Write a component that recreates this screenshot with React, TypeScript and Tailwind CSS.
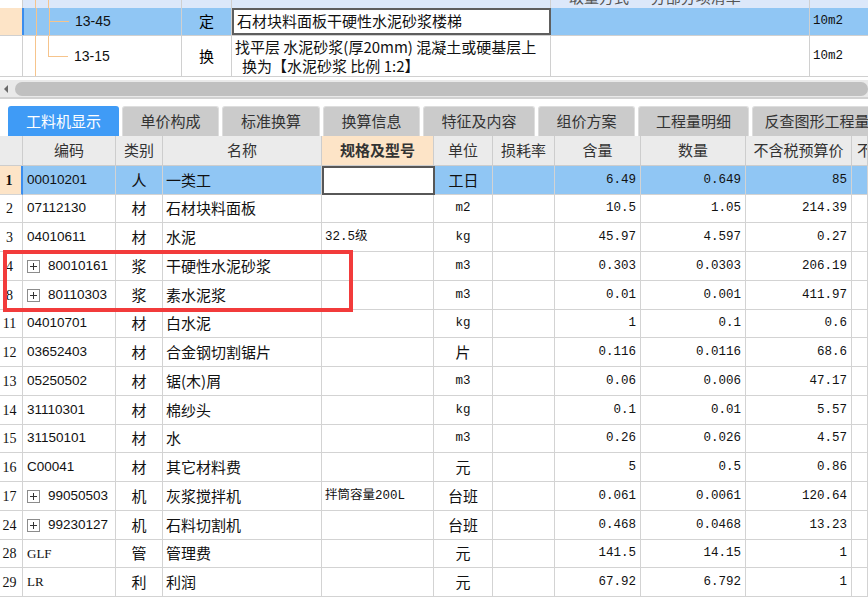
import React from "react";

const CJK = "font-['Noto_Sans_CJK_SC',sans-serif]";
const MONO = "font-['Liberation_Mono','Noto_Sans_CJK_SC',monospace]";
const SANS = "font-['Liberation_Sans','Noto_Sans_CJK_SC',sans-serif]";
const SERIF = "font-['Liberation_Serif','Noto_Sans_CJK_SC',serif]";

type Item = {
  n: string;
  code: string;
  plus?: boolean;
  serifCode?: boolean;
  kind: string;
  name: string;
  spec?: string;
  unit: string;
  qty: string;
  amt: string;
  price: string;
};

const items: Item[] = [
  { n: "1", code: "00010201", kind: "人", name: "一类工", unit: "工日", qty: "6.49", amt: "0.649", price: "85" },
  { n: "2", code: "07112130", kind: "材", name: "石材块料面板", unit: "m2", qty: "10.5", amt: "1.05", price: "214.39" },
  { n: "3", code: "04010611", kind: "材", name: "水泥", spec: "32.5级", unit: "kg", qty: "45.97", amt: "4.597", price: "0.27" },
  { n: "4", code: "80010161", plus: true, kind: "浆", name: "干硬性水泥砂浆", unit: "m3", qty: "0.303", amt: "0.0303", price: "206.19" },
  { n: "8", code: "80110303", plus: true, kind: "浆", name: "素水泥浆", unit: "m3", qty: "0.01", amt: "0.001", price: "411.97" },
  { n: "11", code: "04010701", kind: "材", name: "白水泥", unit: "kg", qty: "1", amt: "0.1", price: "0.6" },
  { n: "12", code: "03652403", kind: "材", name: "合金钢切割锯片", unit: "片", qty: "0.116", amt: "0.0116", price: "68.6" },
  { n: "13", code: "05250502", kind: "材", name: "锯(木)屑", unit: "m3", qty: "0.06", amt: "0.006", price: "47.17" },
  { n: "14", code: "31110301", kind: "材", name: "棉纱头", unit: "kg", qty: "0.1", amt: "0.01", price: "5.57" },
  { n: "15", code: "31150101", kind: "材", name: "水", unit: "m3", qty: "0.26", amt: "0.026", price: "4.57" },
  { n: "16", code: "C00041", kind: "材", name: "其它材料费", unit: "元", qty: "5", amt: "0.5", price: "0.86" },
  { n: "17", code: "99050503", plus: true, kind: "机", name: "灰浆搅拌机", spec: "拌筒容量200L", unit: "台班", qty: "0.061", amt: "0.0061", price: "120.64" },
  { n: "24", code: "99230127", plus: true, kind: "机", name: "石料切割机", unit: "台班", qty: "0.468", amt: "0.0468", price: "13.23" },
  { n: "28", code: "GLF", serifCode: true, kind: "管", name: "管理费", unit: "元", qty: "141.5", amt: "14.15", price: "1" },
  { n: "29", code: "LR", serifCode: true, kind: "利", name: "利润", unit: "元", qty: "67.92", amt: "6.792", price: "1" },
];

const rowHeights = [
  "h-[29px]", "h-[28px]", "h-[29px]", "h-[29px]", "h-[29px]", "h-[28px]", "h-[29px]", "h-[29px]",
  "h-[29px]", "h-[28px]", "h-[29px]", "h-[29px]", "h-[29px]", "h-[28px]", "h-[29px]",
];

const tabs = [
  { label: "工料机显示", w: "w-[111px]" },
  { label: "单价构成", w: "w-[97px]" },
  { label: "标准换算", w: "w-[98px]" },
  { label: "换算信息", w: "w-[97px]" },
  { label: "特征及内容", w: "w-[112px]" },
  { label: "组价方案", w: "w-[97px]" },
  { label: "工程量明细", w: "w-[111px]" },
  { label: "反查图形工程量", w: "w-[130px]" },
];

// tree connector for the upper grid (vertical trunk + elbow)
function Tree({ h, elbow, stemEnd }: { h: number; elbow?: number; stemEnd?: number }) {
  return (
    <svg width="50" height={h} className="shrink-0 block">
      <line x1="12.5" y1="0" x2="12.5" y2={h} stroke="#f6c48c" strokeWidth="1" />
      <line x1="25.5" y1="0" x2="25.5" y2={stemEnd ?? h} stroke="#f6c48c" strokeWidth="1" />
      {elbow !== undefined && (
        <line x1="25" y1={elbow + 0.5} x2="45" y2={elbow + 0.5} stroke="#f6c48c" strokeWidth="1" />
      )}
    </svg>
  );
}

function TopPane() {
  const line = "border-r border-[#d0d0d0]";
  return (
    <div className="flex flex-col">
      <div className="flex h-[8px] overflow-hidden bg-[#dce8fa]">
        <div className={`w-[23px] shrink-0 bg-white ${line}`} />
        <div className={`w-[159px] shrink-0 ${line}`}>
          <Tree h={8} />
        </div>
        <div className={`w-[50px] shrink-0 ${line}`} />
        <div className={`w-[319px] shrink-0 ${line}`} />
        <div className={`w-[259px] shrink-0 overflow-hidden ${line}`}>
          <div className={`-mt-[12px] pl-[18px] text-[15px] leading-[18px] text-[#555] whitespace-nowrap ${CJK}`}>
            取量方式 · 分部分项清单
          </div>
        </div>
        <div className="flex-1" />
      </div>

      <div className="flex h-[28px] bg-[#90c6f4] border-b border-[#d0d0d0]">
        <div className="w-[24px] shrink-0 bg-[#fde4c7] border-r-2 border-[#3b8ded]" />
        <div className={`w-[158px] shrink-0 flex items-center ${line}`}>
          <Tree h={28} elbow={13} />
          <span className={`ml-[1px] text-[14px] text-[#111] ${SANS}`}>13-45</span>
        </div>
        <div className={`w-[50px] shrink-0 flex items-center justify-center text-[15px] ${CJK} ${line}`}>定</div>
        <div className={`w-[319px] shrink-0 bg-white border-2 border-[#5e5e5e] flex items-center pl-[3px] text-[15px] text-[#111] whitespace-nowrap ${CJK}`}>
          石材块料面板干硬性水泥砂浆楼梯
        </div>
        <div className={`w-[259px] shrink-0 ${line}`} />
        <div className={`flex-1 flex items-center pl-[3px] text-[12.5px] text-[#111] ${MONO}`}>10m2</div>
      </div>

      <div className="flex h-[41px] bg-white border-b border-[#d0d0d0]">
        <div className={`w-[23px] shrink-0 ${line}`} />
        <div className={`w-[159px] shrink-0 flex items-center ${line}`}>
          <Tree h={40} elbow={20} stemEnd={21} />
          <span className={`ml-[1px] text-[14px] text-[#111] ${SANS}`}>13-15</span>
        </div>
        <div className={`w-[50px] shrink-0 flex items-center justify-center text-[15px] ${CJK} ${line}`}>换</div>
        <div className={`w-[319px] shrink-0 flex flex-col justify-center gap-[1px] pl-[3px] text-[15px] leading-[18px] text-[#111] whitespace-nowrap ${CJK} ${line}`}>
          <div className="h-[18px]">找平层 水泥砂浆(厚20mm) 混凝土或硬基层上</div>
          <div className="h-[18px] pl-[7px]">换为【水泥砂浆 比例 1:2】</div>
        </div>
        <div className={`w-[259px] shrink-0 ${line}`} />
        <div className={`flex-1 flex items-center pl-[3px] text-[12.5px] text-[#111] ${MONO}`}>10m2</div>
      </div>

      <div className="h-[3px] bg-white" />

      <div className="flex items-center h-[17px] bg-[#e9e9e9]">
        <svg width="12" height="10" className="shrink-0 ml-[1px]">
          <polygon points="7,1 3,5 7,9" fill="#6a6a6a" />
        </svg>
        <div className="flex-1 h-[14px] rounded-[7px] bg-[#c0c0c0] ml-[2px]" />
      </div>
      <div className="h-[2px] bg-[#d2d2d2]" />
      <div className="h-[7px] bg-white" />
    </div>
  );
}

function Tabs() {
  return (
    <div className="flex items-end gap-[3px] pl-[8px] h-[30px] overflow-hidden">
      {tabs.map((t, i) => (
        <div
          key={t.label}
          className={`${t.w} shrink-0 h-[30px] flex items-center justify-center rounded-t-[3px] text-[15px] whitespace-nowrap ${CJK} ${
            i === 0
              ? "bg-[#3f9bf6] text-white"
              : "bg-[#cbcbcb] text-[#333] border border-b-0 border-[#dedede]"
          }`}
        >
          {t.label}
        </div>
      ))}
    </div>
  );
}

function PlusBox() {
  return (
    <svg width="13" height="13" className="shrink-0 block">
      <rect x="0.5" y="0.5" width="12" height="12" fill="white" stroke="#8c8c8c" />
      <line x1="3" y1="6.5" x2="10" y2="6.5" stroke="#333" />
      <line x1="6.5" y1="3" x2="6.5" y2="10" stroke="#333" />
    </svg>
  );
}

function HeaderRow() {
  const hc = `shrink-0 h-full flex items-center justify-center border-r border-b border-[#cdcdcd] text-[15px] text-[#333] whitespace-nowrap ${CJK}`;
  return (
    <div className="flex h-[30px] bg-[#ebebeb]">
      <div className={`${hc} w-[23px]`} />
      <div className={`${hc} w-[93px]`}>编码</div>
      <div className={`${hc} w-[47px]`}>类别</div>
      <div className={`${hc} w-[159px]`}>名称</div>
      <div className={`${hc} w-[112px] bg-[#fde4c7] font-bold text-[#222]`}>规格及型号</div>
      <div className={`${hc} w-[59px]`}>单位</div>
      <div className={`${hc} w-[62px]`}>损耗率</div>
      <div className={`${hc} w-[86px]`}>含量</div>
      <div className={`${hc} w-[105px]`}>数量</div>
      <div className={`${hc} w-[106px]`}>不含税预算价</div>
      <div className={`${hc} flex-1 justify-start pl-[5px] overflow-hidden`}>不</div>
    </div>
  );
}

function DataRow({ item, h, selected }: { item: Item; h: string; selected: boolean }) {
  const cell = "shrink-0 h-full flex items-center border-r border-b border-[#d3d3d3] overflow-hidden whitespace-nowrap text-[#111]";
  const latinUnit = /^[a-z0-9]+$/i.test(item.unit);
  return (
    <div className={`flex ${h} ${selected ? "bg-[#90c6f4]" : "bg-white"}`}>
      <div
        className={`${cell} w-[23px] justify-center pr-[3px] text-[14px] ${SERIF} ${
          selected ? "bg-[#fde4c7] font-bold border-r-2 border-r-[#3b8ded]" : "bg-white"
        }`}
      >
        {item.n}
      </div>
      <div className={`${cell} w-[93px] pl-[4px]`}>
        {item.plus && (
          <span className="mr-[8px]">
            <PlusBox />
          </span>
        )}
        <span className={item.serifCode ? `text-[13px] ${SERIF}` : `text-[13.5px] ${SANS}`}>{item.code}</span>
      </div>
      <div className={`${cell} w-[47px] justify-center text-[15px] ${CJK}`}>{item.kind}</div>
      <div className={`${cell} w-[159px] pl-[3px] text-[15px] ${CJK}`}>{item.name}</div>
      {selected ? (
        <div className="shrink-0 w-[113px] h-full bg-white border-2 border-[#575757]" />
      ) : (
        <div className={`${cell} w-[112px] pl-[3px] text-[12.5px] ${MONO}`}>{item.spec ?? ""}</div>
      )}
      <div
        className={`${cell} ${selected ? "w-[58px]" : "w-[59px]"} justify-center ${
          latinUnit ? `text-[12.5px] ${MONO}` : `text-[15px] ${CJK}`
        }`}
      >
        {item.unit}
      </div>
      <div className={`${cell} w-[62px]`} />
      <div className={`${cell} w-[86px] justify-end pr-[4px] text-[12.5px] ${MONO}`}>{item.qty}</div>
      <div className={`${cell} w-[105px] justify-end pr-[4px] text-[12.5px] ${MONO}`}>{item.amt}</div>
      <div className={`${cell} w-[106px] justify-end pr-[4px] text-[12.5px] ${MONO}`}>{item.price}</div>
      <div className={`${cell} flex-1`} />
    </div>
  );
}

export default function App() {
  return (
    <div className="relative w-[868px] h-[603px] overflow-hidden bg-white">
      <TopPane />
      <Tabs />
      <HeaderRow />
      {items.map((it, i) => (
        <DataRow key={it.n} item={it} h={rowHeights[i]} selected={i === 0} />
      ))}
      {/* red annotation frame around rows 4 and 8 */}
      <div className="absolute left-[3px] top-[250px] w-[350px] h-[62px] border-4 border-[#f23b3b] pointer-events-none" />
    </div>
  );
}
